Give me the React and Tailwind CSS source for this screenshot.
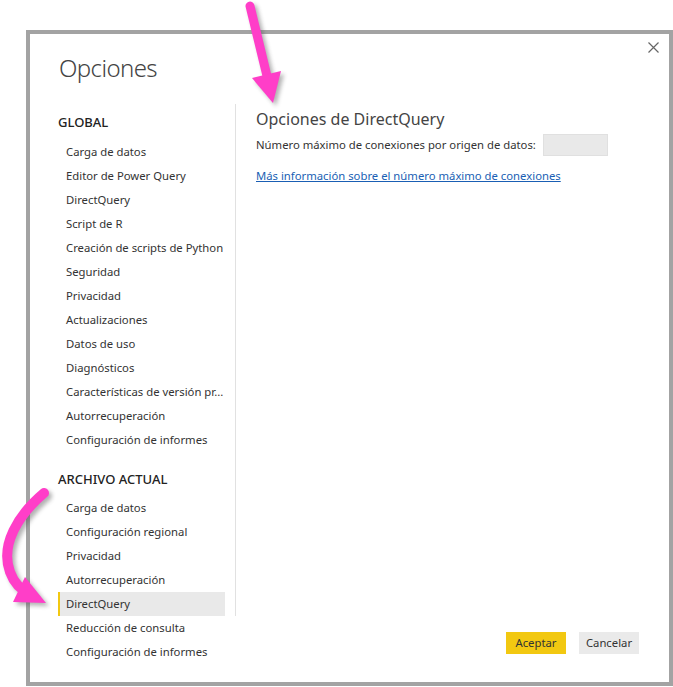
import React from "react";

const globalItems = [
  "Carga de datos",
  "Editor de Power Query",
  "DirectQuery",
  "Script de R",
  "Creación de scripts de Python",
  "Seguridad",
  "Privacidad",
  "Actualizaciones",
  "Datos de uso",
  "Diagnósticos",
  "Características de versión pr...",
  "Autorrecuperación",
  "Configuración de informes",
];

const fileItems = [
  "Carga de datos",
  "Configuración regional",
  "Privacidad",
  "Autorrecuperación",
  "DirectQuery",
  "Reducción de consulta",
  "Configuración de informes",
];

function NavItem({ label, selected }) {
  return (
    <div
      className={
        selected
          ? "h-[24px] flex items-center border-l-2 border-[#f2c811] bg-[#e9e9e9] pl-[6px] whitespace-nowrap"
          : "h-[24px] flex items-center pl-[8px] whitespace-nowrap"
      }
    >
      {label}
    </div>
  );
}

export default function App() {
  return (
    <div className="relative w-[673px] h-[687px] bg-white overflow-hidden font-['Noto_Sans',sans-serif] text-[#333]">
      <div className="ml-[26px] mt-[30px] w-[647px] h-[656px] border-[4px] border-[#a3a3a3] bg-white flex flex-col">
        <div className="flex justify-between items-start">
          <div className="pl-[29px] pt-[18px] h-[70px] text-[24px] leading-[32px] font-light tracking-[-0.6px] text-[#444]">
            Opciones
          </div>
          <button className="mt-[4px] mr-[7px] w-[18px] h-[18px] flex items-center justify-center text-[#666]">
            <svg width="11" height="11" viewBox="0 0 11 11">
              <path d="M0.5 0.5 L10.5 10.5 M10.5 0.5 L0.5 10.5" stroke="#666" strokeWidth="1.2" fill="none" />
            </svg>
          </button>
        </div>
        <div className="flex flex-1">
          <div className="ml-[28px] w-[167px] pt-[8px] text-[11.3px]">
            <div className="h-[20px] leading-[20px] text-[13px] font-medium text-[#222]">GLOBAL</div>
            <div className="mt-[8px]">
              {globalItems.map((it) => (
                <NavItem key={it} label={it} />
              ))}
            </div>
            <div className="mt-[17px] h-[20px] leading-[20px] text-[13px] font-medium text-[#222]">ARCHIVO ACTUAL</div>
            <div className="mt-[7px]">
              {fileItems.map((it) => (
                <NavItem key={it} label={it} selected={it === "DirectQuery"} />
              ))}
            </div>
          </div>
          <div className="ml-[10px] w-px h-[512px] bg-[#e1e1e1]" />
          <div className="flex-1 flex flex-col pl-[20px] pr-[30px] pt-[3px] pb-[28px]">
            <div className="text-[16px] leading-[24px] text-[#444]">Opciones de DirectQuery</div>
            <div className="mt-[3px] flex items-center h-[22px] text-[11.3px]">
              <span>Número máximo de conexiones por origen de datos:</span>
              <div className="ml-[7px] w-[65px] h-[22px] bg-[#e9e9e9] border border-[#e0e0e0]" />
            </div>
            <a className="mt-[12px] text-[11.3px] leading-[16px] text-[#1a5fb4] underline">
              Más información sobre el número máximo de conexiones
            </a>
            <div className="mt-auto flex justify-end gap-[13px] text-[11.3px]">
              <button className="w-[60px] h-[22px] bg-[#f2c811] text-[#333]">Aceptar</button>
              <button className="w-[60px] h-[22px] bg-[#eaeaea] text-[#333]">Cancelar</button>
            </div>
          </div>
        </div>
      </div>

      <svg className="absolute left-0 top-0 pointer-events-none" width="673" height="687" viewBox="0 0 673 687">
        <defs>
          <filter id="sh" x="-50%" y="-50%" width="200%" height="200%">
            <feGaussianBlur stdDeviation="2" />
          </filter>
        </defs>
        <g transform="translate(3,3)" opacity="0.45" filter="url(#sh)">
          <path d="M250 6 L267 76" stroke="#555" strokeWidth="9" strokeLinecap="round" fill="none" />
          <polygon points="252,78 281,71 273,103" fill="#555" />
          <path d="M44 493 C 18 515, 0 545, 10 572 C 14 583, 21 590, 30 594" stroke="#555" strokeWidth="10" strokeLinecap="round" fill="none" />
          <polygon points="25,577 13,602 46,603" fill="#555" />
        </g>
        <path d="M250 6 L267 76" stroke="#ff3ec8" strokeWidth="9" strokeLinecap="round" fill="none" />
        <polygon points="252,78 281,71 273,103" fill="#ff3ec8" />
        <path d="M44 493 C 18 515, 0 545, 10 572 C 14 583, 21 590, 30 594" stroke="#ff3ec8" strokeWidth="10" strokeLinecap="round" fill="none" />
        <polygon points="25,577 13,602 46,603" fill="#ff3ec8" />
      </svg>
    </div>
  );
}
